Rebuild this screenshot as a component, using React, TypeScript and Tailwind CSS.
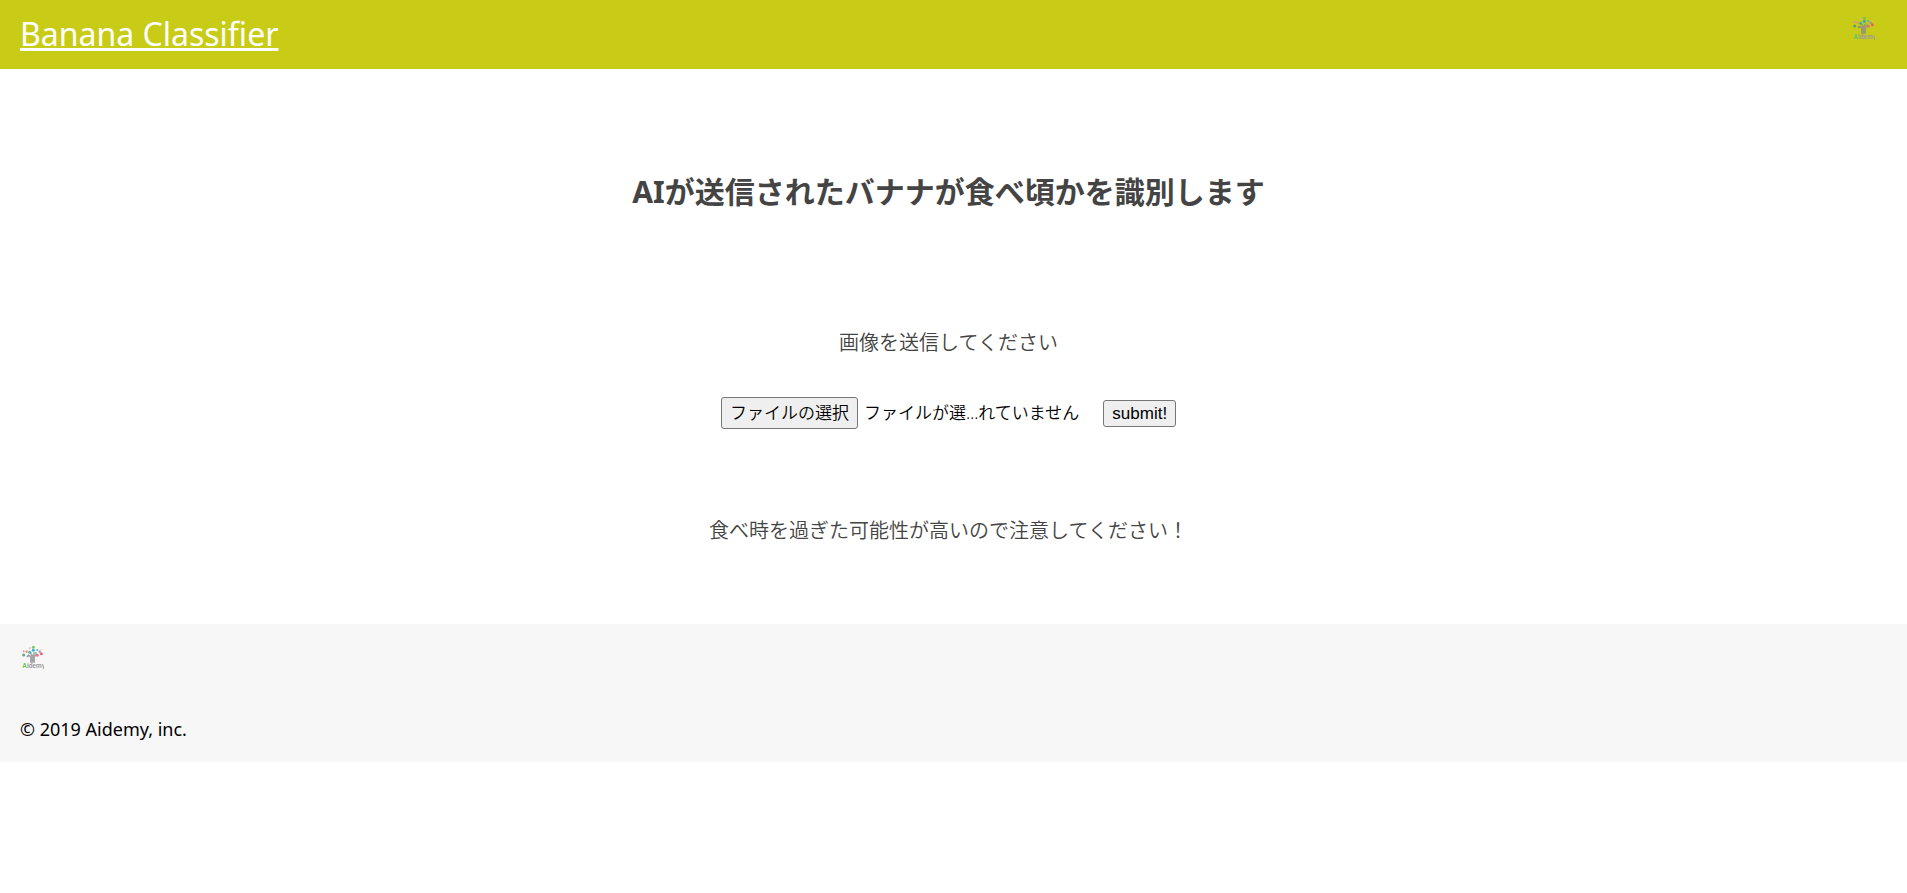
import { useRef, useState } from "react";

function Logo() {
  return (
    <svg className="h-[25px] w-[22px]" viewBox="0 0 66 75" role="img" aria-label="Aidemy">
      <path
        d="M24 56V40l-8-6 3-3 8 4-3-8 4-1 4 7 3-8 4 1-2 8 7-6 3 3-8 8v17z"
        fill="#8a8a8a"
        fillOpacity="0.75"
      />
      <g fillOpacity="0.85">
        <circle cx="5" cy="33" r="4.5" fill="#4a9a6a" />
        <circle cx="5" cy="22" r="3" fill="#ec7fa6" />
        <circle cx="14" cy="23" r="4" fill="#e39a5c" />
        <circle cx="17" cy="37" r="3" fill="#7d7aa8" />
        <circle cx="23" cy="13" r="3" fill="#efa0c0" />
        <circle cx="23" cy="25" r="4.5" fill="#2fa9b5" />
        <circle cx="34" cy="10" r="4.5" fill="#6cc04a" />
        <circle cx="34" cy="19" r="4.5" fill="#1aa6c9" />
        <circle cx="41" cy="27" r="3.5" fill="#7ccb5e" />
        <circle cx="46" cy="18" r="3" fill="#4aa3d8" />
        <circle cx="53" cy="23" r="3.5" fill="#a07ac0" />
        <circle cx="57" cy="18" r="2.5" fill="#e6c45a" />
        <circle cx="46" cy="34" r="4.5" fill="#ec5f86" />
        <circle cx="58" cy="29" r="4.5" fill="#e0506e" />
      </g>
      <text x="1" y="71" fontSize="19" fontWeight="bold" fontFamily="Liberation Sans, sans-serif" fill="#999999">
        <tspan fill="#5fc85a">A</tspan>idemy
      </text>
    </svg>
  );
}

export default function App() {
  const fileRef = useRef<HTMLInputElement>(null);
  const [fileName, setFileName] = useState("ファイルが選…れていません");

  return (
    <div lang="ja" className="font-['Noto_Sans','Noto_Sans_CJK_JP',sans-serif]">
      <header className="flex items-start justify-between bg-[#c9cc17] px-5 pt-[11px] pb-[13px]">
        <a href="/" className="text-[32px] leading-[45px] text-white underline">
          Banana Classifier
        </a>
        <a href="/" className="mt-1 mr-3">
          <Logo />
        </a>
      </header>

      <main className="pr-2.5 text-center text-[#444444]">
        <h1 className="pt-25 text-[30px] leading-[45px] font-bold">
          AIが送信されたバナナが食べ頃かを識別します
        </h1>
        <p className="mt-[114px] text-xl leading-[30px] font-[350]">画像を送信してください</p>
        <form
          className="mt-[39px] flex items-center justify-center text-[17px] text-black"
          onSubmit={(e) => e.preventDefault()}
        >
          <input
            ref={fileRef}
            type="file"
            name="file"
            aria-label="ファイルの選択"
            className="hidden"
            onChange={(e) => setFileName(e.target.files?.[0]?.name ?? "ファイルが選…れていません")}
          />
          <button
            type="button"
            onClick={() => fileRef.current?.click()}
            className="h-8 rounded-[3px] border border-[#767676] bg-[#efefef] px-2 leading-7 font-[350]"
          >
            ファイルの選択
          </button>
          <span className="ml-1.5 font-[350]">{fileName}</span>
          <button
            type="submit"
            className="ml-6 rounded-[3px] border border-[#767676] bg-[#efefef] px-2 font-['Liberation_Sans',sans-serif] leading-[25px]"
          >
            submit!
          </button>
        </form>
        <p className="mt-[87px] pb-[78px] text-xl leading-[30px] font-[350]">
          食べ時を過ぎた可能性が高いので注意してください！
        </p>
      </main>

      <footer className="bg-[#f7f7f7] px-5 pt-5 pb-5">
        <a href="/" className="ml-0.5 inline-block align-top">
          <Logo />
        </a>
        <p className="mt-12 text-lg leading-[25px] text-black">© 2019 Aidemy, inc.</p>
      </footer>
    </div>
  );
}
